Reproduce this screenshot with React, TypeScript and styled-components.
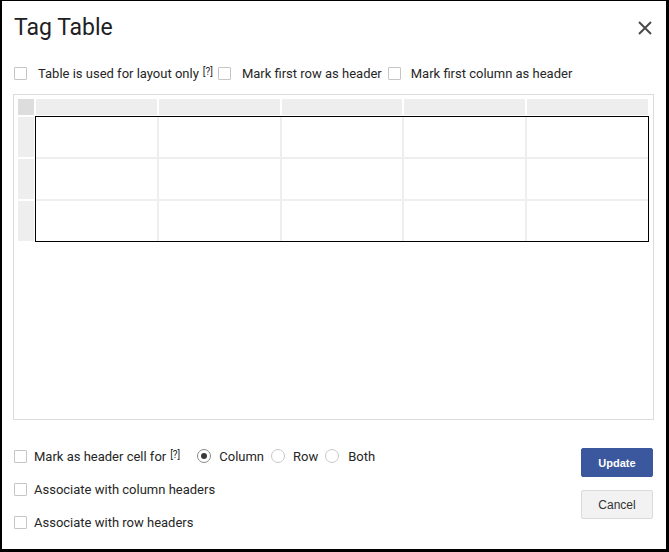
import { FC } from 'react';
import styled, { createGlobalStyle } from 'styled-components';

const GlobalStyle = createGlobalStyle`
  html, body {
    margin: 0;
    padding: 0;
    background: #fff;
  }
  body {
    font-family: Roboto, 'Liberation Sans', Arial, sans-serif;
    color: #262626;
  }
  * {
    box-sizing: border-box;
  }
`;

const Dialog = styled.div`
  width: 669px;
  height: 552px;
  display: flex;
  flex-direction: column;
  background: #fff;
  border-style: solid;
  border-color: #000;
  border-width: 1px 3px 3px 2px;
`;

const Header = styled.div`
  height: 54px;
  display: flex;
  align-items: center;
  justify-content: space-between;
  padding: 0 14px 0 12px;
`;

const Title = styled.h1`
  margin: 0;
  font-size: 23px;
  line-height: 26px;
  font-weight: 400;
  color: #202124;
`;

const CloseButton = styled.button`
  width: 14px;
  height: 14px;
  padding: 0;
  border: 0;
  background: none;
  display: flex;
  cursor: pointer;
`;

const OptionsRow = styled.div`
  height: 24px;
  margin-top: 6px;
  padding: 0 12px;
  display: flex;
  align-items: center;
  font-size: 13px;
`;

const Option = styled.label<{ $gap?: number; $after?: number }>`
  display: flex;
  align-items: center;
  gap: ${p => p.$gap ?? 11}px;
  margin-right: ${p => p.$after ?? 0}px;
  white-space: nowrap;
  cursor: pointer;
`;

const Box = styled.span`
  width: 13px;
  height: 13px;
  flex: none;
  border: 1px solid #c6c6c6;
  border-radius: 1px;
  background: #fff;
`;

const Help = styled.sup<{ $before: number; $after: number }>`
  font-size: 10px;
  line-height: 0;
  margin: 0 ${p => p.$after}px 0 ${p => p.$before}px;
  position: relative;
  top: -1px;
`;

const Preview = styled.div`
  margin: 9px 12px 0 11px;
  height: 326px;
  border: 1px solid #dcdcdc;
  padding: 4px 5px 4px 4px;
`;

const Grid = styled.div`
  display: grid;
  grid-template-columns: 16px repeat(5, 1fr);
  grid-template-rows: 16px repeat(3, 40px);
  gap: 2px;
`;

const HeadCell = styled.div<{ $corner?: boolean }>`
  background: ${p => (p.$corner ? '#dddddd' : '#eeeeee')};
`;

const Body = styled.div`
  grid-column: 2 / -1;
  grid-row: 2 / -1;
  display: grid;
  grid-template-columns: repeat(5, 1fr);
  grid-template-rows: repeat(3, 40px);
  gap: 2px;
  background: #eeeeee;
  outline: 1px solid #000;
`;

const BodyCell = styled.div`
  background: #fff;
`;

const Footer = styled.div`
  margin-top: 24px;
  padding: 0 13px 0 12px;
  display: flex;
  justify-content: space-between;
  align-items: flex-start;
`;

const FooterOptions = styled.div`
  display: flex;
  flex-direction: column;
  gap: 9px;
  font-size: 13px;
`;

const FooterRow = styled.div`
  height: 24px;
  display: flex;
  align-items: center;
`;

const Radio = styled.span<{ $checked?: boolean }>`
  width: 14px;
  height: 14px;
  flex: none;
  border-radius: 50%;
  border: 1px solid ${p => (p.$checked ? '#8a8a8a' : '#c8c8c8')};
  background: #fff;
  display: flex;
  align-items: center;
  justify-content: center;

  &::after {
    content: '';
    width: 6px;
    height: 6px;
    border-radius: 50%;
    background: ${p => (p.$checked ? '#3a3a3a' : 'transparent')};
  }
`;

const Buttons = styled.div`
  margin-top: 4px;
  display: flex;
  flex-direction: column;
  gap: 13px;
`;

const Button = styled.button<{ $primary?: boolean }>`
  width: 72px;
  height: 29px;
  border-radius: 2px;
  font-family: 'Liberation Sans', Arial, sans-serif;
  font-size: ${p => (p.$primary ? 11 : 12)}px;
  font-weight: ${p => (p.$primary ? 700 : 400)};
  color: ${p => (p.$primary ? '#fff' : '#333')};
  background: ${p => (p.$primary ? '#3b579d' : '#f2f2f2')};
  border: 1px solid ${p => (p.$primary ? '#3b579d' : '#dadada')};
  cursor: pointer;
`;

const CloseIcon: FC = () => (
  <svg width="14" height="14" viewBox="0 0 14 14">
    <path d="M1 1 L13 13 M13 1 L1 13" stroke="#4a4a4a" strokeWidth="2" fill="none" />
  </svg>
);

const columns = [0, 1, 2, 3, 4];
const rows = [0, 1, 2];

const App: FC = () => {
  return <>
    <GlobalStyle />
    <Dialog>
      <Header>
        <Title>Tag Table</Title>
        <CloseButton aria-label="Close"><CloseIcon /></CloseButton>
      </Header>

      <OptionsRow>
        <Option><Box />Table is used for layout only</Option>
        <Help $before={4} $after={5}>[?]</Help>
        <Option $after={6}><Box />Mark first row as header</Option>
        <Option $gap={10}><Box />Mark first column as header</Option>
      </OptionsRow>

      <Preview>
        <Grid>
          <HeadCell $corner />
          {columns.map(c => <HeadCell key={'h' + c} />)}
          {rows.map(r => <HeadCell key={'r' + r} style={{ gridColumn: 1, gridRow: r + 2 }} />)}
          <Body>
            {rows.flatMap(r => columns.map(c => <BodyCell key={r + '-' + c} />))}
          </Body>
        </Grid>
      </Preview>

      <Footer>
        <FooterOptions>
          <FooterRow>
            <Option $gap={7}><Box />Mark as header cell for</Option>
            <Help $before={4} $after={17}>[?]</Help>
            <Option $gap={8} $after={7}><Radio $checked />Column</Option>
            <Option $gap={8} $after={7}><Radio />Row</Option>
            <Option $gap={9}><Radio />Both</Option>
          </FooterRow>
          <FooterRow>
            <Option $gap={7}><Box />Associate with column headers</Option>
          </FooterRow>
          <FooterRow>
            <Option $gap={7}><Box />Associate with row headers</Option>
          </FooterRow>
        </FooterOptions>
        <Buttons>
          <Button $primary>Update</Button>
          <Button>Cancel</Button>
        </Buttons>
      </Footer>
    </Dialog>
  </>;
};

export default App;
